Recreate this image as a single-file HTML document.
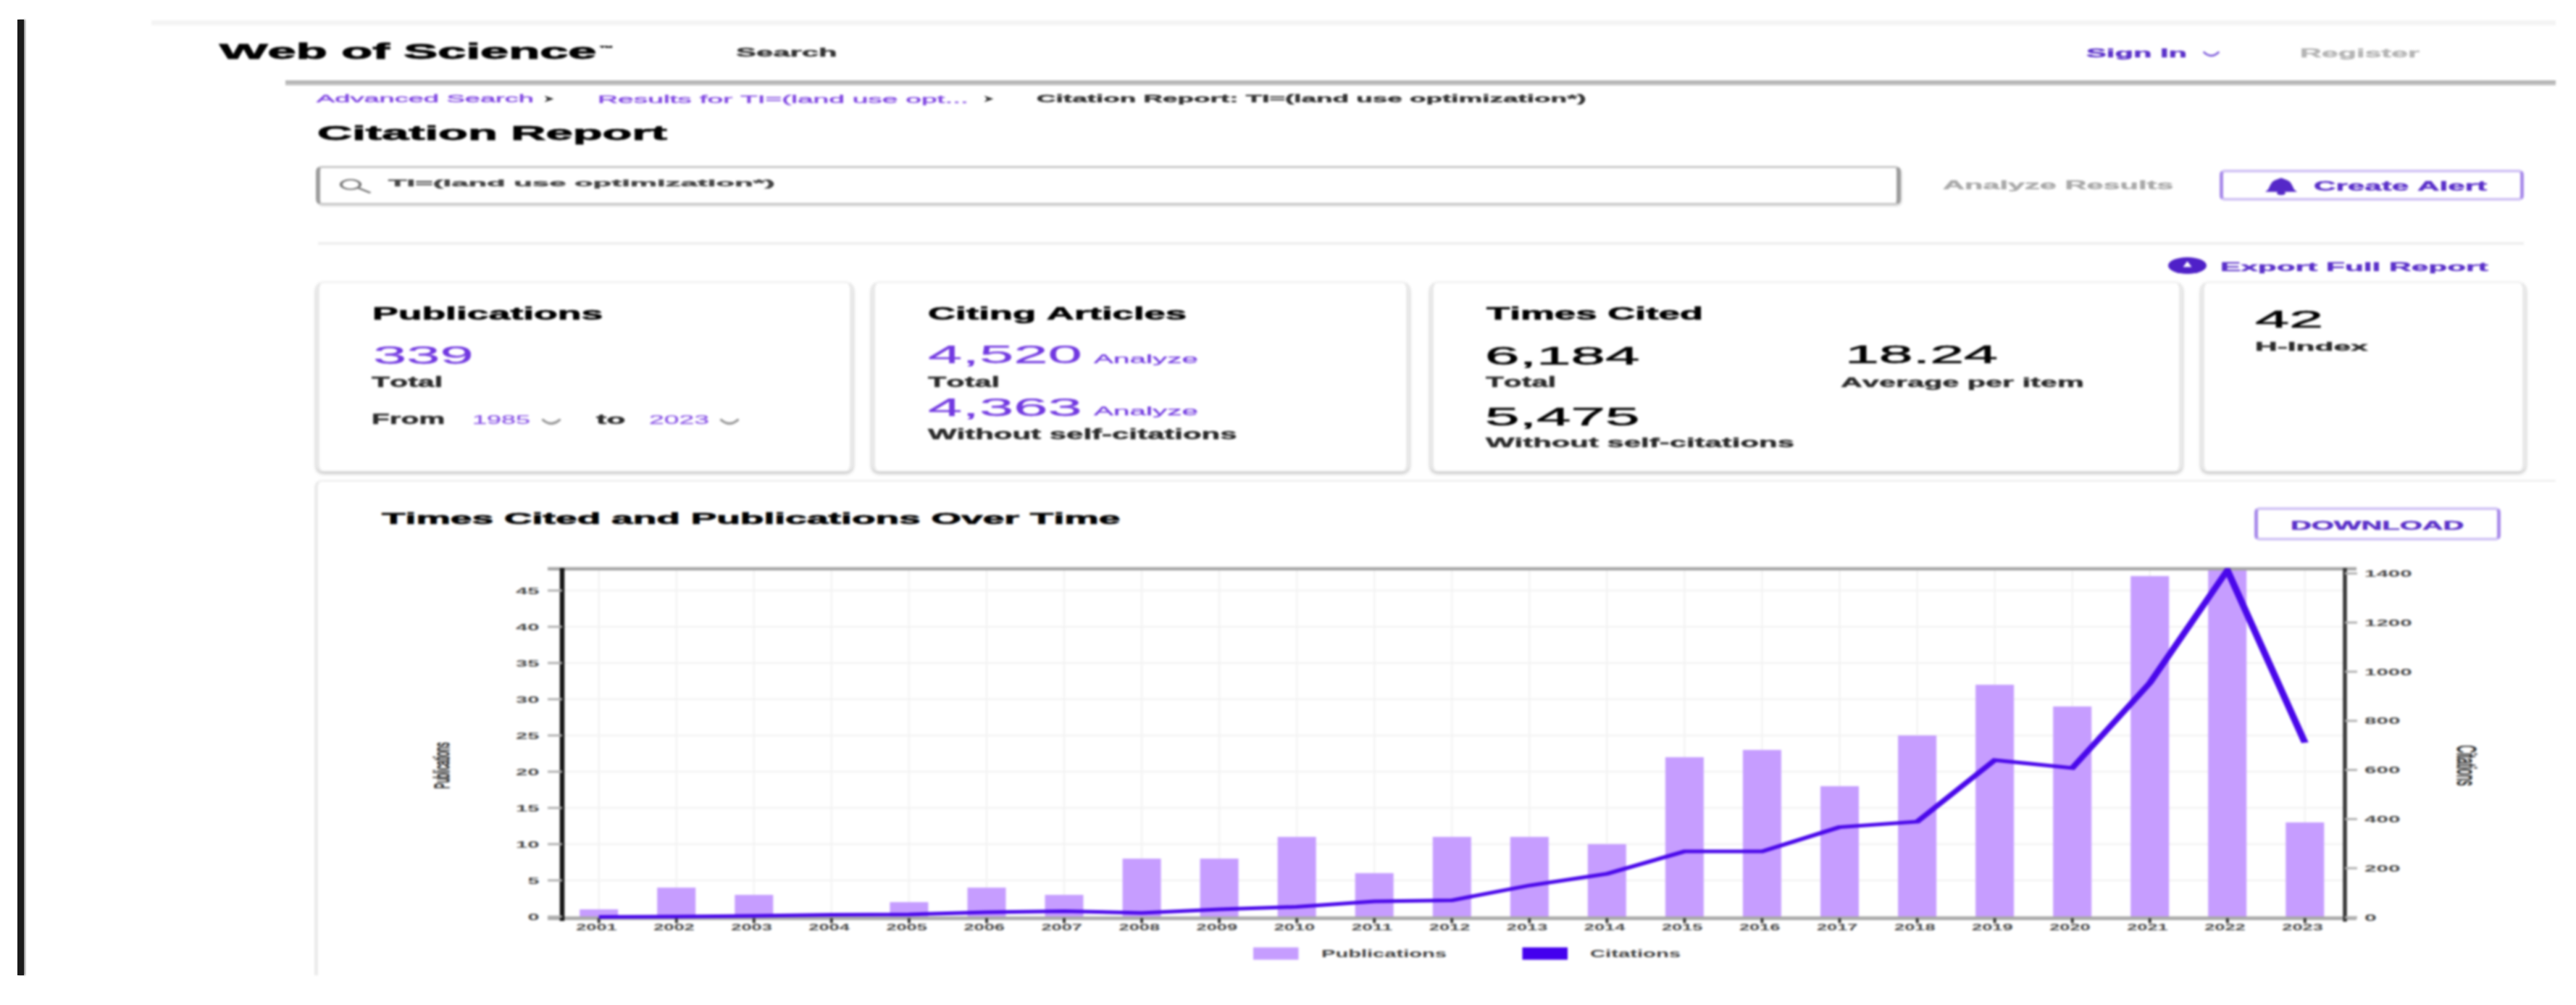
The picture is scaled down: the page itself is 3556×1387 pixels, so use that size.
<!DOCTYPE html>
<html lang="en">
<head>
<meta charset="utf-8">
<title>Citation Report - Web of Science</title>
<style>
html,body{margin:0;padding:0;background:#fff;}
body{width:3556px;height:1387px;position:relative;overflow:hidden;font-family:"Liberation Sans",sans-serif;}
#shot{position:absolute;left:0;top:0;width:3556px;height:1387px;overflow:hidden;filter:blur(1.4px);}
.abs{position:absolute;}
.t{position:absolute;white-space:nowrap;line-height:1;transform-origin:0 0;font-kerning:none;letter-spacing:0;}
.leftbar{left:24px;top:27px;width:9px;height:1319px;background:#1b1b1b;box-shadow:2px 0 2px rgba(27,27,27,.5);z-index:2;}
.topline{left:209px;top:28px;width:3319px;height:7px;background:#f4f4f4;}
.hdrline{left:394px;top:111px;width:3134px;height:7px;background:linear-gradient(#adadad,#b8b8b8 50%,#cfcfcf);}
.sepline{left:439px;top:334px;width:3045px;height:4px;background:#efefef;}
.searchbox{left:436px;top:229px;width:2176px;height:48px;border:3px solid #c9c9c9;border-left:6px solid #9c9c9c;border-right:6px solid #9c9c9c;border-radius:8px;background:#fff;box-shadow:2px 2px 2px rgba(0,0,0,.12);}
.btn{border:4px solid #d3c5f5;border-left:5px solid #a88aea;border-right:5px solid #a88aea;border-radius:7px;background:#fff;box-sizing:border-box;}
.card{background:#fff;border:2px solid #f3f3f3;border-left:5px solid #e9e9e9;border-right:5px solid #e9e9e9;border-radius:10px;box-sizing:border-box;box-shadow:0 3px 4px rgba(0,0,0,.22),0 0 3px rgba(0,0,0,.10);}
.chartcard{left:434px;top:662px;width:3200px;height:760px;border:3px solid #f1f1f1;border-left:5px solid #ebebeb;border-radius:10px;box-sizing:border-box;background:#fff;}
.whiteout{left:0;top:1346px;width:3556px;height:41px;background:#fff;}
.whiteright{left:3528px;top:0;width:28px;height:1387px;background:#fff;}
svg.chart{position:absolute;left:0;top:0;}
svg.ico{position:absolute;overflow:visible;}
</style>
</head>
<body>
<div class="abs leftbar"></div>
<div id="shot">
  <div class="abs topline"></div>
  <div class="abs hdrline"></div>
  <div class="abs sepline"></div>

  <div class="abs searchbox"></div>
  <div class="abs btn" style="left:3064px;top:234px;width:420px;height:43px"></div>

  <div class="abs card" style="left:436px;top:389px;width:742px;height:262px"></div>
  <div class="abs card" style="left:1203px;top:389px;width:743px;height:262px"></div>
  <div class="abs card" style="left:1974px;top:389px;width:1039px;height:262px"></div>
  <div class="abs card" style="left:3038px;top:389px;width:449px;height:262px"></div>

  <div class="abs chartcard"></div>
  <div class="abs btn" style="left:3112px;top:700px;width:340px;height:46px"></div>

<svg class="chart" width="3556" height="1387" viewBox="0 0 3556 1387" font-family="Liberation Sans, sans-serif">
<g stroke="#f3f3f3" stroke-width="2.5">
<line x1="826.7" y1="787" x2="826.7" y2="1265"/>
<line x1="933.8" y1="787" x2="933.8" y2="1265"/>
<line x1="1040.8" y1="787" x2="1040.8" y2="1265"/>
<line x1="1147.8" y1="787" x2="1147.8" y2="1265"/>
<line x1="1254.9" y1="787" x2="1254.9" y2="1265"/>
<line x1="1362.0" y1="787" x2="1362.0" y2="1265"/>
<line x1="1469.0" y1="787" x2="1469.0" y2="1265"/>
<line x1="1576.1" y1="787" x2="1576.1" y2="1265"/>
<line x1="1683.1" y1="787" x2="1683.1" y2="1265"/>
<line x1="1790.2" y1="787" x2="1790.2" y2="1265"/>
<line x1="1897.2" y1="787" x2="1897.2" y2="1265"/>
<line x1="2004.2" y1="787" x2="2004.2" y2="1265"/>
<line x1="2111.3" y1="787" x2="2111.3" y2="1265"/>
<line x1="2218.3" y1="787" x2="2218.3" y2="1265"/>
<line x1="2325.4" y1="787" x2="2325.4" y2="1265"/>
<line x1="2432.4" y1="787" x2="2432.4" y2="1265"/>
<line x1="2539.5" y1="787" x2="2539.5" y2="1265"/>
<line x1="2646.6" y1="787" x2="2646.6" y2="1265"/>
<line x1="2753.6" y1="787" x2="2753.6" y2="1265"/>
<line x1="2860.7" y1="787" x2="2860.7" y2="1265"/>
<line x1="2967.7" y1="787" x2="2967.7" y2="1265"/>
<line x1="3074.8" y1="787" x2="3074.8" y2="1265"/>
<line x1="3181.8" y1="787" x2="3181.8" y2="1265"/>
<line x1="779" y1="1215.0" x2="3235" y2="1215.0"/>
<line x1="779" y1="1165.0" x2="3235" y2="1165.0"/>
<line x1="779" y1="1115.0" x2="3235" y2="1115.0"/>
<line x1="779" y1="1065.0" x2="3235" y2="1065.0"/>
<line x1="779" y1="1015.0" x2="3235" y2="1015.0"/>
<line x1="779" y1="965.0" x2="3235" y2="965.0"/>
<line x1="779" y1="915.0" x2="3235" y2="915.0"/>
<line x1="779" y1="865.0" x2="3235" y2="865.0"/>
<line x1="779" y1="815.0" x2="3235" y2="815.0"/>
</g>
<g fill="#c69dff">
<rect x="800.2" y="1255.0" width="53" height="10.0"/>
<rect x="907.2" y="1225.0" width="53" height="40.0"/>
<rect x="1014.3" y="1235.0" width="53" height="30.0"/>
<rect x="1228.4" y="1245.0" width="53" height="20.0"/>
<rect x="1335.5" y="1225.0" width="53" height="40.0"/>
<rect x="1442.5" y="1235.0" width="53" height="30.0"/>
<rect x="1549.6" y="1185.0" width="53" height="80.0"/>
<rect x="1656.6" y="1185.0" width="53" height="80.0"/>
<rect x="1763.7" y="1155.0" width="53" height="110.0"/>
<rect x="1870.7" y="1205.0" width="53" height="60.0"/>
<rect x="1977.8" y="1155.0" width="53" height="110.0"/>
<rect x="2084.8" y="1155.0" width="53" height="110.0"/>
<rect x="2191.8" y="1165.0" width="53" height="100.0"/>
<rect x="2298.9" y="1045.0" width="53" height="220.0"/>
<rect x="2405.9" y="1035.0" width="53" height="230.0"/>
<rect x="2513.0" y="1085.0" width="53" height="180.0"/>
<rect x="2620.1" y="1015.0" width="53" height="250.0"/>
<rect x="2727.1" y="945.0" width="53" height="320.0"/>
<rect x="2834.2" y="975.0" width="53" height="290.0"/>
<rect x="2941.2" y="795.0" width="53" height="470.0"/>
<rect x="3048.2" y="786.0" width="53" height="479.0"/>
<rect x="3155.3" y="1135.0" width="53" height="130.0"/>
</g>
<line x1="756" y1="785" x2="3253" y2="785" stroke="#a4a4a4" stroke-width="4.5"/>
<line x1="756" y1="1267.3" x2="3253" y2="1267.3" stroke="#a9a9a9" stroke-width="5"/>
<line x1="776" y1="784" x2="776" y2="1271" stroke="#141414" stroke-width="6.5"/>
<line x1="3237" y1="784" x2="3237" y2="1272" stroke="#363636" stroke-width="5.5"/>
<g stroke="#b0b0b0" stroke-width="3">
<line x1="756" y1="1265.0" x2="776" y2="1265.0"/>
<line x1="756" y1="1215.0" x2="776" y2="1215.0"/>
<line x1="756" y1="1165.0" x2="776" y2="1165.0"/>
<line x1="756" y1="1115.0" x2="776" y2="1115.0"/>
<line x1="756" y1="1065.0" x2="776" y2="1065.0"/>
<line x1="756" y1="1015.0" x2="776" y2="1015.0"/>
<line x1="756" y1="965.0" x2="776" y2="965.0"/>
<line x1="756" y1="915.0" x2="776" y2="915.0"/>
<line x1="756" y1="865.0" x2="776" y2="865.0"/>
<line x1="756" y1="815.0" x2="776" y2="815.0"/>
<line x1="3237" y1="1266.0" x2="3254" y2="1266.0"/>
<line x1="3237" y1="1198.2" x2="3254" y2="1198.2"/>
<line x1="3237" y1="1130.4" x2="3254" y2="1130.4"/>
<line x1="3237" y1="1062.6" x2="3254" y2="1062.6"/>
<line x1="3237" y1="994.8" x2="3254" y2="994.8"/>
<line x1="3237" y1="927.0" x2="3254" y2="927.0"/>
<line x1="3237" y1="859.2" x2="3254" y2="859.2"/>
<line x1="3237" y1="791.4" x2="3254" y2="791.4"/>
<line x1="826.7" y1="1267" x2="826.7" y2="1274" stroke="#3c3c3c" stroke-width="4"/>
<line x1="933.8" y1="1267" x2="933.8" y2="1274" stroke="#3c3c3c" stroke-width="4"/>
<line x1="1040.8" y1="1267" x2="1040.8" y2="1274" stroke="#3c3c3c" stroke-width="4"/>
<line x1="1147.8" y1="1267" x2="1147.8" y2="1274" stroke="#3c3c3c" stroke-width="4"/>
<line x1="1254.9" y1="1267" x2="1254.9" y2="1274" stroke="#3c3c3c" stroke-width="4"/>
<line x1="1362.0" y1="1267" x2="1362.0" y2="1274" stroke="#3c3c3c" stroke-width="4"/>
<line x1="1469.0" y1="1267" x2="1469.0" y2="1274" stroke="#3c3c3c" stroke-width="4"/>
<line x1="1576.1" y1="1267" x2="1576.1" y2="1274" stroke="#3c3c3c" stroke-width="4"/>
<line x1="1683.1" y1="1267" x2="1683.1" y2="1274" stroke="#3c3c3c" stroke-width="4"/>
<line x1="1790.2" y1="1267" x2="1790.2" y2="1274" stroke="#3c3c3c" stroke-width="4"/>
<line x1="1897.2" y1="1267" x2="1897.2" y2="1274" stroke="#3c3c3c" stroke-width="4"/>
<line x1="2004.2" y1="1267" x2="2004.2" y2="1274" stroke="#3c3c3c" stroke-width="4"/>
<line x1="2111.3" y1="1267" x2="2111.3" y2="1274" stroke="#3c3c3c" stroke-width="4"/>
<line x1="2218.3" y1="1267" x2="2218.3" y2="1274" stroke="#3c3c3c" stroke-width="4"/>
<line x1="2325.4" y1="1267" x2="2325.4" y2="1274" stroke="#3c3c3c" stroke-width="4"/>
<line x1="2432.4" y1="1267" x2="2432.4" y2="1274" stroke="#3c3c3c" stroke-width="4"/>
<line x1="2539.5" y1="1267" x2="2539.5" y2="1274" stroke="#3c3c3c" stroke-width="4"/>
<line x1="2646.6" y1="1267" x2="2646.6" y2="1274" stroke="#3c3c3c" stroke-width="4"/>
<line x1="2753.6" y1="1267" x2="2753.6" y2="1274" stroke="#3c3c3c" stroke-width="4"/>
<line x1="2860.7" y1="1267" x2="2860.7" y2="1274" stroke="#3c3c3c" stroke-width="4"/>
<line x1="2967.7" y1="1267" x2="2967.7" y2="1274" stroke="#3c3c3c" stroke-width="4"/>
<line x1="3074.8" y1="1267" x2="3074.8" y2="1274" stroke="#3c3c3c" stroke-width="4"/>
<line x1="3181.8" y1="1267" x2="3181.8" y2="1274" stroke="#3c3c3c" stroke-width="4"/>
</g>
<clipPath id="plot"><rect x="380" y="784" width="1300" height="500"/></clipPath>
<g transform="scale(2,1)" clip-path="url(#plot)"><polyline points="413.35,1265.5 466.88,1265.0 520.40,1264.0 573.92,1262.5 627.45,1262.0 680.98,1259.0 734.50,1257.5 788.03,1260.0 841.55,1255.0 895.08,1251.5 948.60,1244.0 1002.12,1242.5 1055.65,1222.0 1109.17,1206.0 1162.70,1175.0 1216.22,1175.0 1269.75,1141.5 1323.28,1134.0 1376.80,1049.0 1430.33,1060.0 1483.85,942.5 1537.38,787.0 1590.90,1025.0" fill="none" stroke="#4a08ea" stroke-width="5" stroke-linejoin="miter" stroke-linecap="butt"/></g>
<text x="728.5" y="1269.6" font-size="12.6" font-weight="700" fill="#4a4a4a" textLength="16.0" lengthAdjust="spacingAndGlyphs">0</text>
<text x="728.5" y="1219.6" font-size="12.6" font-weight="700" fill="#4a4a4a" textLength="16.0" lengthAdjust="spacingAndGlyphs">5</text>
<text x="712.0" y="1169.6" font-size="12.6" font-weight="700" fill="#4a4a4a" textLength="32.5" lengthAdjust="spacingAndGlyphs">10</text>
<text x="712.0" y="1119.6" font-size="12.6" font-weight="700" fill="#4a4a4a" textLength="32.5" lengthAdjust="spacingAndGlyphs">15</text>
<text x="712.0" y="1069.6" font-size="12.6" font-weight="700" fill="#4a4a4a" textLength="32.5" lengthAdjust="spacingAndGlyphs">20</text>
<text x="712.0" y="1019.6" font-size="12.6" font-weight="700" fill="#4a4a4a" textLength="32.5" lengthAdjust="spacingAndGlyphs">25</text>
<text x="712.0" y="969.6" font-size="12.6" font-weight="700" fill="#4a4a4a" textLength="32.5" lengthAdjust="spacingAndGlyphs">30</text>
<text x="712.0" y="919.6" font-size="12.6" font-weight="700" fill="#4a4a4a" textLength="32.5" lengthAdjust="spacingAndGlyphs">35</text>
<text x="712.0" y="869.6" font-size="12.6" font-weight="700" fill="#4a4a4a" textLength="32.5" lengthAdjust="spacingAndGlyphs">40</text>
<text x="712.0" y="819.6" font-size="12.6" font-weight="700" fill="#4a4a4a" textLength="32.5" lengthAdjust="spacingAndGlyphs">45</text>
<text x="3264.0" y="1270.6" font-size="12.6" font-weight="700" fill="#4a4a4a" textLength="16.8" lengthAdjust="spacingAndGlyphs">0</text>
<text x="3264.0" y="1202.8" font-size="12.6" font-weight="700" fill="#4a4a4a" textLength="49.4" lengthAdjust="spacingAndGlyphs">200</text>
<text x="3264.0" y="1135.0" font-size="12.6" font-weight="700" fill="#4a4a4a" textLength="49.4" lengthAdjust="spacingAndGlyphs">400</text>
<text x="3264.0" y="1067.2" font-size="12.6" font-weight="700" fill="#4a4a4a" textLength="49.4" lengthAdjust="spacingAndGlyphs">600</text>
<text x="3264.0" y="999.4" font-size="12.6" font-weight="700" fill="#4a4a4a" textLength="49.4" lengthAdjust="spacingAndGlyphs">800</text>
<text x="3264.0" y="931.6" font-size="12.6" font-weight="700" fill="#4a4a4a" textLength="65.7" lengthAdjust="spacingAndGlyphs">1000</text>
<text x="3264.0" y="863.8" font-size="12.6" font-weight="700" fill="#4a4a4a" textLength="65.7" lengthAdjust="spacingAndGlyphs">1200</text>
<text x="3264.0" y="796.0" font-size="12.6" font-weight="700" fill="#4a4a4a" textLength="65.7" lengthAdjust="spacingAndGlyphs">1400</text>
<text x="795.2" y="1284.0" font-size="12.4" font-weight="700" fill="#4a4a4a" textLength="56.5" lengthAdjust="spacingAndGlyphs">2001</text>
<text x="902.2" y="1284.0" font-size="12.4" font-weight="700" fill="#4a4a4a" textLength="56.5" lengthAdjust="spacingAndGlyphs">2002</text>
<text x="1009.3" y="1284.0" font-size="12.4" font-weight="700" fill="#4a4a4a" textLength="56.5" lengthAdjust="spacingAndGlyphs">2003</text>
<text x="1116.3" y="1284.0" font-size="12.4" font-weight="700" fill="#4a4a4a" textLength="56.5" lengthAdjust="spacingAndGlyphs">2004</text>
<text x="1223.4" y="1284.0" font-size="12.4" font-weight="700" fill="#4a4a4a" textLength="56.5" lengthAdjust="spacingAndGlyphs">2005</text>
<text x="1330.5" y="1284.0" font-size="12.4" font-weight="700" fill="#4a4a4a" textLength="56.5" lengthAdjust="spacingAndGlyphs">2006</text>
<text x="1437.5" y="1284.0" font-size="12.4" font-weight="700" fill="#4a4a4a" textLength="56.5" lengthAdjust="spacingAndGlyphs">2007</text>
<text x="1544.6" y="1284.0" font-size="12.4" font-weight="700" fill="#4a4a4a" textLength="56.5" lengthAdjust="spacingAndGlyphs">2008</text>
<text x="1651.6" y="1284.0" font-size="12.4" font-weight="700" fill="#4a4a4a" textLength="56.5" lengthAdjust="spacingAndGlyphs">2009</text>
<text x="1758.7" y="1284.0" font-size="12.4" font-weight="700" fill="#4a4a4a" textLength="56.5" lengthAdjust="spacingAndGlyphs">2010</text>
<text x="1865.7" y="1284.0" font-size="12.4" font-weight="700" fill="#4a4a4a" textLength="56.5" lengthAdjust="spacingAndGlyphs">2011</text>
<text x="1972.8" y="1284.0" font-size="12.4" font-weight="700" fill="#4a4a4a" textLength="56.5" lengthAdjust="spacingAndGlyphs">2012</text>
<text x="2079.8" y="1284.0" font-size="12.4" font-weight="700" fill="#4a4a4a" textLength="56.5" lengthAdjust="spacingAndGlyphs">2013</text>
<text x="2186.8" y="1284.0" font-size="12.4" font-weight="700" fill="#4a4a4a" textLength="56.5" lengthAdjust="spacingAndGlyphs">2014</text>
<text x="2293.9" y="1284.0" font-size="12.4" font-weight="700" fill="#4a4a4a" textLength="56.5" lengthAdjust="spacingAndGlyphs">2015</text>
<text x="2400.9" y="1284.0" font-size="12.4" font-weight="700" fill="#4a4a4a" textLength="56.5" lengthAdjust="spacingAndGlyphs">2016</text>
<text x="2508.0" y="1284.0" font-size="12.4" font-weight="700" fill="#4a4a4a" textLength="56.5" lengthAdjust="spacingAndGlyphs">2017</text>
<text x="2615.1" y="1284.0" font-size="12.4" font-weight="700" fill="#4a4a4a" textLength="56.5" lengthAdjust="spacingAndGlyphs">2018</text>
<text x="2722.1" y="1284.0" font-size="12.4" font-weight="700" fill="#4a4a4a" textLength="56.5" lengthAdjust="spacingAndGlyphs">2019</text>
<text x="2829.2" y="1284.0" font-size="12.4" font-weight="700" fill="#4a4a4a" textLength="56.5" lengthAdjust="spacingAndGlyphs">2020</text>
<text x="2936.2" y="1284.0" font-size="12.4" font-weight="700" fill="#4a4a4a" textLength="56.5" lengthAdjust="spacingAndGlyphs">2021</text>
<text x="3043.2" y="1284.0" font-size="12.4" font-weight="700" fill="#4a4a4a" textLength="56.5" lengthAdjust="spacingAndGlyphs">2022</text>
<text x="3150.3" y="1284.0" font-size="12.4" font-weight="700" fill="#4a4a4a" textLength="56.5" lengthAdjust="spacingAndGlyphs">2023</text>
<rect x="1730" y="1307.5" width="62.5" height="17" fill="#c69dff"/>
<text x="1824.0" y="1321.0" font-size="14.5" font-weight="700" fill="#444" textLength="173.0" lengthAdjust="spacingAndGlyphs">Publications</text>
<rect x="2101.5" y="1307.5" width="62.5" height="17" fill="#4400ee"/>
<text x="2195.0" y="1321.0" font-size="14.5" font-weight="700" fill="#444" textLength="125.0" lengthAdjust="spacingAndGlyphs">Citations</text>
<g transform="translate(620,1056.5) scale(2,1) rotate(-90)"><text x="0" y="0" text-anchor="middle" font-size="15" fill="#333" stroke="#333" stroke-width="0.7" textLength="64" lengthAdjust="spacingAndGlyphs">Publications</text></g>
<g transform="translate(3391.5,1056.5) scale(2,1) rotate(90)"><text x="0" y="0" text-anchor="middle" font-size="18.5" fill="#333" stroke="#333" stroke-width="0.7" textLength="56" lengthAdjust="spacingAndGlyphs">Citations</text></g>
</svg>

  <!-- icons -->
  <!-- search magnifier -->
  <svg class="ico" style="left:468px;top:246px" width="46" height="22" viewBox="0 0 46 22"><g transform="scale(2,1)"><circle cx="8" cy="8.6" r="6.6" fill="none" stroke="#7a7a7a" stroke-width="2"/><line x1="13" y1="13.2" x2="21" y2="19.6" stroke="#7a7a7a" stroke-width="2.2" stroke-linecap="round"/></g></svg>
  <!-- breadcrumb arrows -->
  <svg class="ico" style="left:751px;top:132px" width="14" height="9" viewBox="0 0 14 9"><path d="M0.5 0 L13.5 4.5 L0.5 9 L4.5 4.5 Z" fill="#2a2a2a"/></svg>
  <svg class="ico" style="left:1358px;top:132px" width="14" height="9" viewBox="0 0 14 9"><path d="M0.5 0 L13.5 4.5 L0.5 9 L4.5 4.5 Z" fill="#2a2a2a"/></svg>
  <!-- sign in chevron -->
  <svg class="ico" style="left:3041px;top:71px" width="23" height="9" viewBox="0 0 23 9"><path d="M1.5 1.2 Q11.5 10.5 21.5 1.2" fill="none" stroke="#7b58da" stroke-width="2.6" stroke-linecap="round" stroke-linejoin="round"/></svg>
  <!-- year chevrons -->
  <svg class="ico" style="left:748px;top:578px" width="26" height="10" viewBox="0 0 26 10"><path d="M1.5 1.5 Q13 11.5 24.5 1.5" fill="none" stroke="#999" stroke-width="3.4" stroke-linecap="round"/></svg>
  <svg class="ico" style="left:994px;top:578px" width="26" height="10" viewBox="0 0 26 10"><path d="M1.5 1.5 Q13 11.5 24.5 1.5" fill="none" stroke="#999" stroke-width="3.4" stroke-linecap="round"/></svg>
  <!-- bell -->
  <svg class="ico" style="left:3126px;top:245px" width="46" height="25" viewBox="0 0 46 25"><path d="M23 0.5 C20 1.5 14 3.5 11.5 5.5 C8.5 8 7 13 5 16.5 L1 19.8 L45 19.8 L41 16.5 C39 13 37.5 8 34.5 5.5 C32 3.5 26 1.5 23 0.5 Z" fill="#5528c8"/><ellipse cx="23" cy="21.4" rx="6" ry="2.8" fill="#5528c8"/></svg>
  <!-- export icon -->
  <svg class="ico" style="left:2993px;top:355px" width="53" height="23" viewBox="0 0 53 23"><ellipse cx="26.5" cy="11.5" rx="26.5" ry="11.5" fill="#4f20c8"/><path d="M26.5 5.5 L32.5 13.5 L20.5 13.5 Z" fill="#fff"/></svg>

<div class="t logo" style="left:302.5px;top:56.3px;font-size:29.94px;color:#000;font-weight:700;-webkit-text-stroke:0.90px #000;transform:scaleX(2.3524)">Web of Science</div>
<div class="t tm" style="left:826.5px;top:62.8px;font-size:6.54px;color:#000;font-weight:700;-webkit-text-stroke:0.45px #000;transform:scaleX(3.0577)">™</div>
<div class="t nav" style="left:1016.0px;top:65.3px;font-size:15.70px;color:#333;font-weight:700;-webkit-text-stroke:0.45px #333;transform:scaleX(2.6666)">Search</div>
<div class="t signin" style="left:2879.5px;top:64.8px;font-size:16.28px;color:#5a30c9;font-weight:700;-webkit-text-stroke:0.45px #5a30c9;transform:scaleX(2.5641)">Sign In</div>
<div class="t register" style="left:3174.5px;top:65.8px;font-size:16.72px;color:#b4b4b4;font-weight:700;-webkit-text-stroke:0.45px #b4b4b4;transform:scaleX(2.4693)">Register</div>
<div class="t bc" style="left:437.0px;top:129.2px;font-size:14.83px;color:#8148e2;font-weight:400;-webkit-text-stroke:0.45px #8148e2;transform:scaleX(2.5620)">Advanced Search</div>
<div class="t bc" style="left:824.5px;top:128.9px;font-size:15.12px;color:#8148e2;font-weight:400;-webkit-text-stroke:0.45px #8148e2;transform:scaleX(2.5771)">Results for TI=(land use opt...</div>
<div class="t bc cur" style="left:1430.5px;top:129.0px;font-size:14.97px;color:#333;font-weight:700;-webkit-text-stroke:0.45px #333;transform:scaleX(2.4623)">Citation Report: TI=(land use optimization*)</div>
<div class="t h1" style="left:438.0px;top:170.5px;font-size:26.89px;color:#000;font-weight:700;-webkit-text-stroke:0.75px #000;transform:scaleX(2.4870)">Citation Report</div>
<div class="t q" style="left:536.0px;top:246.0px;font-size:13.66px;color:#444;font-weight:700;-webkit-text-stroke:0.45px #444;transform:scaleX(3.0655)">TI=(land use optimization*)</div>
<div class="t analyze" style="left:2681.5px;top:247.6px;font-size:16.86px;color:#a9a9a9;font-weight:700;-webkit-text-stroke:0.45px #a9a9a9;transform:scaleX(2.4622)">Analyze Results</div>
<div class="t btnlabel" style="left:3193.5px;top:248.5px;font-size:17.44px;color:#5a30c9;font-weight:700;-webkit-text-stroke:0.45px #5a30c9;transform:scaleX(2.4188)">Create Alert</div>
<div class="t export" style="left:3064.5px;top:359.7px;font-size:17.01px;color:#5a30c9;font-weight:700;-webkit-text-stroke:0.45px #5a30c9;transform:scaleX(2.4931)">Export Full Report</div>
<div class="t ct" style="left:513.5px;top:421.0px;font-size:23.98px;color:#000;font-weight:700;-webkit-text-stroke:0.65px #000;transform:scaleX(2.2332)">Publications</div>
<div class="t num" style="left:515.0px;top:472.4px;font-size:35.32px;color:#7138e0;font-weight:400;-webkit-text-stroke:0.25px #7138e0;transform:scaleX(2.3551)">339</div>
<div class="t lbl" style="left:513.0px;top:517.8px;font-size:19.48px;color:#2a2a2a;font-weight:700;-webkit-text-stroke:0.45px #2a2a2a;transform:scaleX(2.1097)">Total</div>
<div class="t lbl" style="left:513.0px;top:568.8px;font-size:19.48px;color:#2a2a2a;font-weight:700;-webkit-text-stroke:0.45px #2a2a2a;transform:scaleX(2.0845)">From</div>
<div class="t yr" style="left:652.0px;top:571.6px;font-size:16.57px;color:#8a55e6;font-weight:400;-webkit-text-stroke:0.25px #8a55e6;transform:scaleX(2.1748)">1985</div>
<div class="t lbl" style="left:822.5px;top:571.1px;font-size:17.44px;color:#2a2a2a;font-weight:700;-webkit-text-stroke:0.45px #2a2a2a;transform:scaleX(2.4636)">to</div>
<div class="t yr" style="left:895.5px;top:571.6px;font-size:16.57px;color:#8a55e6;font-weight:400;-webkit-text-stroke:0.25px #8a55e6;transform:scaleX(2.2563)">2023</div>
<div class="t ct" style="left:1280.5px;top:421.0px;font-size:23.98px;color:#000;font-weight:700;-webkit-text-stroke:0.65px #000;transform:scaleX(2.1979)">Citing Articles</div>
<div class="t num" style="left:1281.0px;top:472.3px;font-size:34.88px;color:#7138e0;font-weight:400;-webkit-text-stroke:0.25px #7138e0;transform:scaleX(2.4391)">4,520</div>
<div class="t an" style="left:1509.5px;top:488.0px;font-size:16.72px;color:#7138e0;font-weight:400;-webkit-text-stroke:0.25px #7138e0;transform:scaleX(2.4233)">Analyze</div>
<div class="t lbl" style="left:1280.5px;top:517.8px;font-size:19.48px;color:#2a2a2a;font-weight:700;-webkit-text-stroke:0.45px #2a2a2a;transform:scaleX(2.1312)">Total</div>
<div class="t num" style="left:1281.0px;top:544.6px;font-size:34.88px;color:#7138e0;font-weight:400;-webkit-text-stroke:0.25px #7138e0;transform:scaleX(2.4391)">4,363</div>
<div class="t an" style="left:1509.5px;top:560.4px;font-size:16.72px;color:#7138e0;font-weight:400;-webkit-text-stroke:0.25px #7138e0;transform:scaleX(2.4233)">Analyze</div>
<div class="t lbl" style="left:1280.5px;top:590.2px;font-size:19.33px;color:#2a2a2a;font-weight:700;-webkit-text-stroke:0.45px #2a2a2a;transform:scaleX(2.1705)">Without self-citations</div>
<div class="t ct" style="left:2051.5px;top:421.0px;font-size:23.98px;color:#000;font-weight:700;-webkit-text-stroke:0.65px #000;transform:scaleX(2.2017)">Times Cited</div>
<div class="t num k" style="left:2050.0px;top:472.5px;font-size:35.18px;color:#000;font-weight:400;-webkit-text-stroke:0.60px #000;transform:scaleX(2.4246)">6,184</div>
<div class="t lbl" style="left:2051.0px;top:517.8px;font-size:19.48px;color:#2a2a2a;font-weight:700;-webkit-text-stroke:0.45px #2a2a2a;transform:scaleX(2.0881)">Total</div>
<div class="t num k" style="left:2050.0px;top:556.8px;font-size:35.18px;color:#000;font-weight:400;-webkit-text-stroke:0.60px #000;transform:scaleX(2.4246)">5,475</div>
<div class="t lbl" style="left:2051.0px;top:601.6px;font-size:18.90px;color:#2a2a2a;font-weight:700;-webkit-text-stroke:0.45px #2a2a2a;transform:scaleX(2.2180)">Without self-citations</div>
<div class="t num k" style="left:2546.5px;top:472.0px;font-size:35.61px;color:#000;font-weight:400;-webkit-text-stroke:0.60px #000;transform:scaleX(2.3668)">18.24</div>
<div class="t lbl" style="left:2541.0px;top:518.5px;font-size:18.02px;color:#2a2a2a;font-weight:700;-webkit-text-stroke:0.45px #2a2a2a;transform:scaleX(2.2960)">Average per item</div>
<div class="t num k" style="left:3113.0px;top:423.6px;font-size:33.72px;color:#000;font-weight:400;-webkit-text-stroke:0.60px #000;transform:scaleX(2.5113)">42</div>
<div class="t lbl" style="left:3113.0px;top:470.6px;font-size:15.99px;color:#2a2a2a;font-weight:700;-webkit-text-stroke:0.45px #2a2a2a;transform:scaleX(2.6555)">H-Index</div>
<div class="t ct" style="left:527.0px;top:704.8px;font-size:21.80px;color:#000;font-weight:700;-webkit-text-stroke:0.65px #000;transform:scaleX(2.4464)">Times Cited and Publications Over Time</div>
<div class="t btnlabel" style="left:3162.0px;top:716.8px;font-size:16.28px;color:#5a30c9;font-weight:700;-webkit-text-stroke:0.45px #5a30c9;transform:scaleX(2.4520)">DOWNLOAD</div>

  <div class="abs whiteout"></div>
  <div class="abs whiteright"></div>
</div>
</body>
</html>
